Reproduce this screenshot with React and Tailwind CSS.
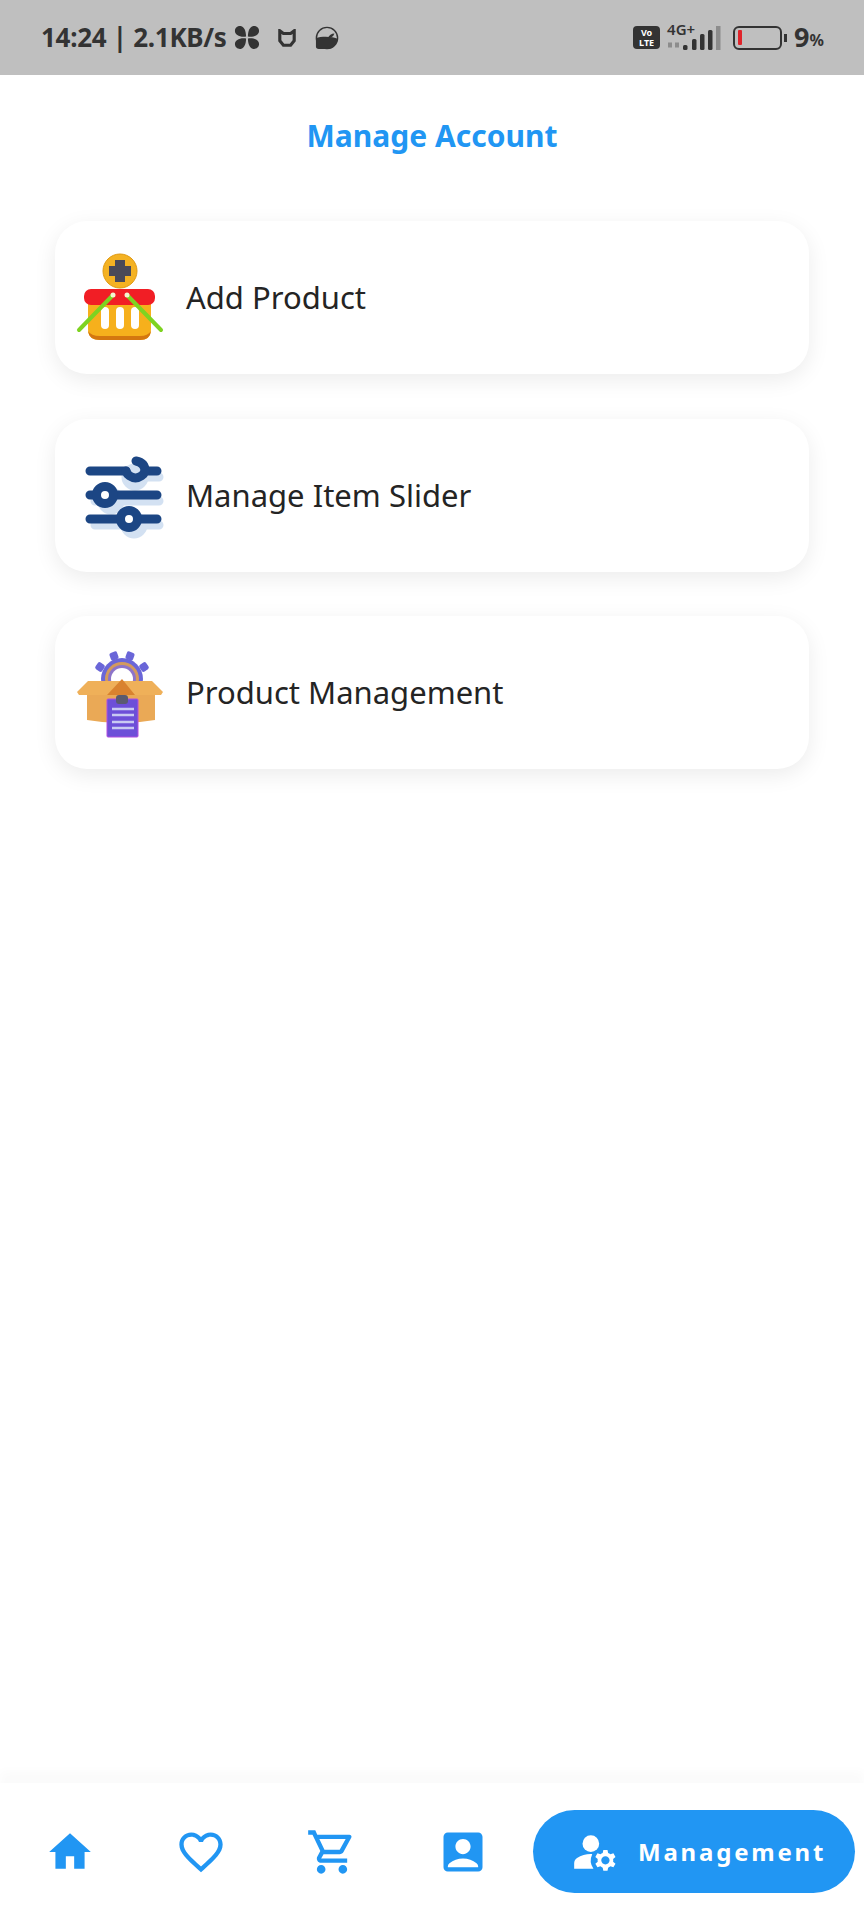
import { MdHome, MdFavoriteBorder, MdOutlineShoppingCart, MdAccountBox, MdManageAccounts } from "react-icons/md";

const font = "font-['Noto_Sans',sans-serif]";

function BasketIcon() {
    return (
        <svg width="90" height="90" viewBox="0 0 90 90">
            <circle cx="45" cy="18" r="17" fill="#f4b223" stroke="#e09a12" strokeWidth="1" />
            <path d="M40 7h10v6h6v10h-6v6H40v-6h-6V13h6z" fill="#4a4a58" />
            <path d="M13 50h63v26q0 11-11 11H25q-12 0-12-11z" fill="#f6b01c" />
            <path d="M13 78q1 9 12 9h40q10 0 11-9-3 5-11 5H25q-9 0-12-5z" fill="#d4770f" />
            <rect x="9" y="36" width="71" height="16" rx="7" fill="#f11e25" />
            <rect x="26" y="54" width="8" height="22" rx="4" fill="#fff" />
            <rect x="41" y="54" width="8" height="22" rx="4" fill="#fff" />
            <rect x="56" y="54" width="8" height="22" rx="4" fill="#fff" />
            <path d="M38 42 4 77M52 42l34 35" stroke="#7ed321" strokeWidth="4" strokeLinecap="round" />
            <circle cx="38" cy="42" r="2.5" fill="#f4f7d0" />
            <circle cx="52" cy="42" r="2.5" fill="#f4f7d0" />
        </svg>
    );
}

function SliderIcon() {
    return (
        <svg width="90" height="90" viewBox="0 0 90 90">
            <g stroke="#d3e1f2" strokeWidth="9" strokeLinecap="round" fill="#d3e1f2">
                <path d="M60 27h24M20 51h64M20 75h64" />
                <circle cx="60" cy="27" r="9" />
                <circle cx="36" cy="51" r="9" />
                <circle cx="59" cy="75" r="9" />
            </g>
            <path d="M15 21h36M70 21h12M15 45h67M15 69h67" stroke="#1c4684" strokeWidth="9" strokeLinecap="round" />
            <path d="M51 21a10 10 0 0 0 19 0c0-6-4-9-9-10" stroke="#1c4684" strokeWidth="9" strokeLinecap="round" fill="none" />
            <circle cx="30" cy="45" r="8.5" fill="#fff" stroke="#1c4684" strokeWidth="9" />
            <circle cx="54" cy="69" r="8.5" fill="#fff" stroke="#1c4684" strokeWidth="9" />
        </svg>
    );
}

function BoxIcon() {
    return (
        <svg width="90" height="90" viewBox="0 0 90 90">
            <g transform="translate(0 3)">
                <g fill="#6a66d8">
                    <circle cx="47" cy="28" r="21" />
                    <rect x="35" y="1" width="8" height="8" rx="2" transform="rotate(-20 39 5)" />
                    <rect x="51" y="1" width="8" height="8" rx="2" transform="rotate(20 55 5)" />
                    <rect x="21" y="12" width="8" height="8" rx="2" transform="rotate(-55 25 16)" />
                    <rect x="65" y="12" width="8" height="8" rx="2" transform="rotate(55 69 16)" />
                </g>
                <circle cx="47" cy="28" r="17" fill="#d39a5e" />
                <circle cx="47" cy="28" r="14" fill="#8d74c9" />
                <circle cx="47" cy="28" r="11" fill="#fff" />
                <path d="M12 43h68v26q-34 6-68 0z" fill="#eaa956" />
                <path d="M2 41 13 30h64l11 11-2 3H4z" fill="#efb059" />
                <path d="M47 28 32 44h28z" fill="#d9822f" />
                <rect x="32" y="48" width="31" height="38" rx="1" fill="#6d4fd8" stroke="#b24fe0" strokeWidth="1" />
                <rect x="41" y="44" width="12" height="9" rx="3" fill="#5a5a70" />
                <path d="M37 58h22M37 64h22M37 71h22M37 77h22" stroke="#c9c9f2" strokeWidth="2.5" />
            </g>
        </svg>
    );
}

function MenuCard({ icon, label }) {
    return (
        <div className="h-[153px] bg-white rounded-[32px] shadow-[0_6px_22px_rgba(0,0,0,0.08)] flex items-center pl-[20px] gap-[21px]">
            {icon}
            <span className="text-[31px] text-[#242424]">{label}</span>
        </div>
    );
}

function StatusBar() {
    return (
        <div className="h-[75px] bg-[#bfbfbf] flex items-center justify-between pl-[41px] pr-[40px] text-[#333]">
            <div className="flex items-center">
                <span className="w-[185px] text-[26px] font-bold tracking-[-0.3px] whitespace-nowrap">14:24 | 2.1KB/s</span>
                <svg width="26" height="25" viewBox="0 0 28 26" className="ml-[8px]" fill="#333">
                    <path d="M13 12C6 13 1 10 1 6s4-6 7-5 5 5 5 11zM15 12c7 1 12-2 12-6s-4-6-7-5-5 5-5 11zM13 14c-7-1-12 2-12 6s4 6 7 5 5-5 5-11zM15 14c7-1 12 2 12 6s-4 6-7 5-5-5-5-11z" />
                </svg>
                <svg width="18" height="18" viewBox="0 0 20 20" className="ml-[18px]" fill="none" stroke="#333" strokeWidth="3.5">
                    <path d="M2 2l4 3h8l4-3v11l-4 5H6l-4-5z" />
                </svg>
                <svg width="24" height="24" viewBox="0 0 26 26" className="ml-[19px]">
                    <circle cx="13" cy="13" r="11.5" fill="none" stroke="#333" strokeWidth="1.5" />
                    <path d="M1 13c6-2 18-2 24 1-2 7-7 11-12 11H4q-3 0-3-3z" fill="#333" />
                    <path d="M14 13c1-3 4-5 7-5-1 3-3 5-7 5z" fill="#333" />
                </svg>
            </div>
            <div className="flex items-center">
                <div className="w-[27px] h-[23px] bg-[#333] rounded-[4px] text-white text-[9px] font-bold leading-[10px] flex flex-col items-center justify-center">
                    <span className="h-[10px]">Vo</span>
                    <span className="h-[10px]">LTE</span>
                </div>
                <div className="relative w-[55px] h-[26px] ml-[7px]">
                    <span className="absolute left-0 top-[-4px] text-[15px] font-semibold leading-[16px]">4G+</span>
                    <svg width="55" height="26" viewBox="0 0 55 26">
                        <path d="M1 20h4M8 20h4" stroke="#8c8c8c" strokeWidth="5" />
                        <rect x="16" y="20" width="4.5" height="5" rx="1.5" fill="#333" />
                        <rect x="25" y="14" width="4.5" height="11" rx="1.5" fill="#333" />
                        <rect x="33" y="9" width="4.5" height="16" rx="1.5" fill="#333" />
                        <rect x="41" y="5" width="4.5" height="20" rx="1.5" fill="#333" />
                        <rect x="49" y="1" width="4.5" height="24" fill="#8c8c8c" />
                    </svg>
                </div>
                <div className="w-[49px] h-[24px] border-[2px] border-[#333] rounded-[6px] ml-[11px] flex items-center pl-[3px]">
                    <div className="w-[4px] h-[15px] bg-[#e0242b] rounded-[1px]" />
                </div>
                <div className="w-[3px] h-[8px] bg-[#333] ml-[2px]" />
                <span className="text-[27px] font-bold ml-[7px]">9</span>
                <span className="text-[16px] font-bold mt-[5px]">%</span>
            </div>
        </div>
    );
}

export default function App() {
    return (
        <div className={`w-[864px] h-[1920px] bg-white flex flex-col ${font}`}>
            <StatusBar />
            <div className="flex-1 px-[55px]">
                <h1 className="h-[124px] pb-[4px] flex items-center justify-center text-[30px] font-bold text-[#2196f3]">Manage Account</h1>
                <div className="flex flex-col gap-[44.5px] mt-[22px]">
                    <MenuCard icon={<BasketIcon />} label="Add Product" />
                    <MenuCard icon={<SliderIcon />} label="Manage Item Slider" />
                    <MenuCard icon={<BoxIcon />} label="Product Management" />
                </div>
            </div>
            <div className="h-[137px] bg-white shadow-[0_-12px_10px_rgba(0,0,0,0.02)] flex items-center pl-[45px] pr-[9px] text-[#2196f3]">
                <MdHome size={50} />
                <MdFavoriteBorder size={52} className="ml-[80px]" />
                <MdOutlineShoppingCart size={52} className="ml-[79px]" />
                <MdAccountBox size={52} className="ml-[79px]" />
                <div className="ml-auto w-[322px] h-[83px] rounded-full bg-[#2196f3] flex items-center pl-[37px] gap-[18px] text-white">
                    <MdManageAccounts size={50} />
                    <span className="text-[24px] font-bold tracking-[2.8px]">Management</span>
                </div>
            </div>
        </div>
    );
}
